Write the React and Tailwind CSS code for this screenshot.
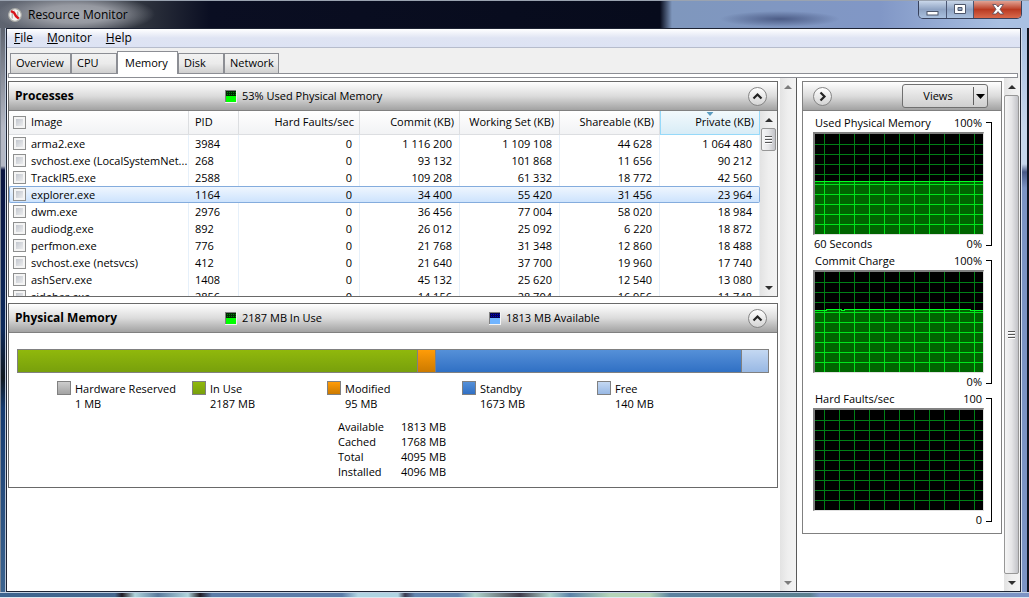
import { useState } from "react";
import clsx from "clsx";

const tabs = [
  { name: "Overview", width: "w-[61px]" },
  { name: "CPU", width: "w-[46px]" },
  { name: "Memory", width: "w-[61px]" },
  { name: "Disk", width: "w-[46px]" },
  { name: "Network", width: "w-[55px]" },
];

const columns = [
  { label: "Hard Faults/sec", key: "faults" },
  { label: "Commit (KB)", key: "commit" },
  { label: "Working Set (KB)", key: "workingSet" },
  { label: "Shareable (KB)", key: "shareable" },
  { label: "Private (KB)", key: "private", sorted: true },
];

const processes = [
  { name: "arma2.exe", pid: 3984, faults: "0", commit: "1 116 200", workingSet: "1 109 108", shareable: "44 628", private: "1 064 480" },
  { name: "svchost.exe (LocalSystemNet...", pid: 268, faults: "0", commit: "93 132", workingSet: "101 868", shareable: "11 656", private: "90 212" },
  { name: "TrackIR5.exe", pid: 2588, faults: "0", commit: "109 208", workingSet: "61 332", shareable: "18 772", private: "42 560" },
  { name: "explorer.exe", pid: 1164, faults: "0", commit: "34 400", workingSet: "55 420", shareable: "31 456", private: "23 964" },
  { name: "dwm.exe", pid: 2976, faults: "0", commit: "36 456", workingSet: "77 004", shareable: "58 020", private: "18 984" },
  { name: "audiodg.exe", pid: 892, faults: "0", commit: "26 012", workingSet: "25 092", shareable: "6 220", private: "18 872" },
  { name: "perfmon.exe", pid: 776, faults: "0", commit: "21 768", workingSet: "31 348", shareable: "12 860", private: "18 488" },
  { name: "svchost.exe (netsvcs)", pid: 412, faults: "0", commit: "21 640", workingSet: "37 700", shareable: "19 960", private: "17 740" },
  { name: "ashServ.exe", pid: 1408, faults: "0", commit: "45 132", workingSet: "25 620", shareable: "12 540", private: "13 080" },
  { name: "sidebar.exe", pid: 2856, faults: "0", commit: "14 156", workingSet: "28 704", shareable: "16 956", private: "11 748" },
];

const memory = [
  { label: "Hardware Reserved", mb: 1, color: "from-[#cccccc] to-[#a3a3a3]" },
  { label: "In Use", mb: 2187, color: "from-[#90b80c] to-[#78a00c]" },
  { label: "Modified", mb: 95, color: "from-[#ff9c08] to-[#cc7a00]" },
  { label: "Standby", mb: 1673, color: "from-[#5590d8] to-[#3070c4]" },
  { label: "Free", mb: 140, color: "from-[#c4d8f2] to-[#98b8e4]" },
];

const totals = [
  ["Available", "1813 MB"],
  ["Cached", "1768 MB"],
  ["Total", "4095 MB"],
  ["Installed", "4096 MB"],
];

const graphs = [
  { title: "Used Physical Memory", max: "100%", min: "0%", time: "60 Seconds", line: "0,47.5 168,47.5" },
  { title: "Commit Charge", max: "100%", min: "0%", line: "0,38.5 11,38.5 11,37.5 26,37.5 26,38.5 29,38.5 29,37.5 155,37.5 155,38.5 168,38.5" },
  { title: "Hard Faults/sec", max: "100", min: "0" },
];

function Checkbox() {
  return (
    <input
      type="checkbox"
      className="h-[13px] w-[13px] shrink-0 appearance-none border border-[#8e8f8f] bg-linear-to-br from-[#b8bdc6] to-[#f6f6f6] shadow-[inset_0_0_0_2px_#f4f4f4] checked:bg-[#4b6fa8]"
    />
  );
}

function RoundButton({ label, right }) {
  return (
    <button
      aria-label={label}
      className="flex h-[19px] w-[19px] shrink-0 items-center justify-center rounded-full border border-[#858585] bg-linear-to-b from-white to-[#d4d4d4]"
    >
      <svg
        width="11"
        height="11"
        viewBox="0 0 11 11"
        fill="none"
        stroke="#222"
        strokeWidth="2.2"
        className={clsx(right && "rotate-90")}
      >
        <path d="M1.5 7.5 L5.5 3.5 L9.5 7.5" />
      </svg>
    </button>
  );
}

function Indicator({ blue, children }) {
  return (
    <div className="flex items-center gap-[5px]">
      <svg width="12" height="13" viewBox="0 0 12 13" shapeRendering="crispEdges">
        <rect width="12" height="13" fill="#f4f4f4" />
        <rect width="11" height="12" fill="#808080" />
        <rect x="1" y="1" width="10" height="5" fill={blue ? "#0000c8" : "#008010"} />
        <path
          d="M1 1.5H11M1 3.5H11M1 5.5H11M1.5 1V6M3.5 1V6M5.5 1V6M7.5 1V6M9.5 1V6"
          stroke={blue ? "#000050" : "#002800"}
        />
        <rect x="1" y="6" width="10" height="6" fill={blue ? "#70b4ff" : "#00ff00"} />
      </svg>
      <span>{children}</span>
    </div>
  );
}

function PanelHeader({ title, children }) {
  return (
    <div className="flex h-[29px] items-center border-b border-[#808080] bg-linear-to-b from-white via-[#dcdcdc] to-[#a2a2a2] pr-[10px] pl-[6px]">
      <h2 className="w-[210px] shrink-0 text-[12px] font-bold">{title}</h2>
      <div className="flex flex-1">{children}</div>
      <RoundButton label={`Collapse ${title}`} />
    </div>
  );
}

function ArrowButton({ label, down, faded }) {
  return (
    <button aria-label={label} className="flex h-[17px] w-full shrink-0 items-center justify-center">
      <svg width="8" height="4" viewBox="0 0 8 4" className={clsx(down && "rotate-180")}>
        <path d="M4 0L8 4H0Z" fill={faded ? "#7c7c7c" : "#303030"} />
      </svg>
    </button>
  );
}

function Grip() {
  return (
    <div className="flex h-2 w-[7px] flex-col justify-between">
      <div className="h-0.5 border-b border-white bg-[#555]" />
      <div className="h-0.5 border-b border-white bg-[#555]" />
      <div className="h-0.5 border-b border-white bg-[#555]" />
    </div>
  );
}

function Scrollbar({ faded, thumb, wide }) {
  return (
    <div
      className={clsx(
        "flex shrink-0 flex-col bg-linear-to-r from-[#e3e3e3] via-[#efefef] to-[#f3f3f3]",
        wide ? "w-[17px] pl-px" : "w-4"
      )}
    >
      <ArrowButton label="Scroll up" faded={faded} />
      <div className="flex min-h-0 flex-1 flex-col">
        {thumb && (
          <div
            className={clsx(
              "flex w-[15px] items-center justify-center rounded-xs border border-[#979797] bg-linear-to-r from-[#f5f5f5] via-[#e6e6e8] to-[#c2c3c8]",
              thumb
            )}
          >
            <Grip />
          </div>
        )}
      </div>
      <ArrowButton label="Scroll down" down faded={faded} />
    </div>
  );
}

function Graph({ title, max, min, time, line }) {
  const xs = [9, 24, 39, 54, 69, 84, 99, 114, 129, 144, 159];
  const ys = [10, 20, 30, 40, 50, 60, 70, 80, 90];
  const grid = xs.map((x) => `M${x + 0.5} 0V100`).join("") + ys.map((y) => `M0 ${y + 0.5}H168`).join("");
  const id = title.replace(/\W/g, "");

  return (
    <div className="flex h-[138px] gap-[2px]">
      <div className="flex w-[171px] flex-col">
        <div className="flex h-[17px] items-center justify-between pr-[2px] pl-[2px]">
          <span>{title}</span>
          <span>{max}</span>
        </div>
        <div className="border-t-2 border-r border-b border-l-2 border-t-[#808080] border-r-[#e0e0e0] border-b-[#e0e0e0] border-l-[#808080]">
          <svg width="168" height="100" viewBox="0 0 168 100" shapeRendering="crispEdges" className="block">
            <rect width="168" height="100" fill="#000" />
            <path d={grid} stroke="#007f16" fill="none" />
            {line && (
              <>
                <clipPath id={id}>
                  <polygon points={`${line} 168,100 0,100`} />
                </clipPath>
                <g clipPath={`url(#${id})`}>
                  <rect width="168" height="100" fill="#006400" />
                  <path d={grid} stroke="#00e41c" fill="none" />
                </g>
                <polyline points={line} stroke="#00ff20" fill="none" />
              </>
            )}
          </svg>
        </div>
        <div className="flex h-[18px] items-center justify-between pr-[2px] pl-px">
          <span>{time}</span>
          <span>{min}</span>
        </div>
      </div>
      <div className="my-[7px] w-1.5 border-y border-r border-black" />
    </div>
  );
}

function TitleBar() {
  return (
    <header className="flex h-7 shrink-0 items-start justify-between border-t border-[#9aa3b0] bg-[radial-gradient(ellipse_80px_20px_at_75px_13px,#a4a7ae_0,#9699a1_45%,#9699a100_100%),radial-gradient(ellipse_60px_8px_at_780px_18px,#4c5c86_0,#4c5c8600_100%),linear-gradient(180deg,#b4d0f000_0,#b4d0f000_100%),linear-gradient(90deg,#5e6470_0,#585d68_50px,#30353f_140px,#0a0e22_210px,#070b1c_660px,#7f97bd_672px,#8197c6_880px,#a9c0e2_1000px)] pr-[7px]">
      <div className="flex h-full items-center gap-[6px] pl-2">
        <svg width="14" height="14" viewBox="0 0 14 14">
          <circle cx="7" cy="7" r="6.3" fill="#f4f4f4" stroke="#a9aaa6" strokeWidth="1.2" />
          <path d="M4.2 10.5V5.5A2.8 2.8 0 0 1 6.5 3M9.8 3.5V8.5" stroke="#9aa39a" fill="none" />
          <path d="M3 3.2L6 4.6L8 8.2L10.8 10.6" stroke="#d8141c" strokeWidth="2.4" fill="none" />
        </svg>
        <h1 className="text-[12px]">Resource Monitor</h1>
      </div>
      <div className="flex h-[18px] overflow-hidden rounded-b-[5px] border border-t-0 border-[#37415c]">
        <button
          aria-label="Minimize"
          className="flex w-7 items-center justify-center border-r border-[#4b5673] bg-linear-to-b from-[#c9d7ea] via-[#8fa3c3] to-[#a9c0de]"
        >
          <svg width="13" height="12" viewBox="0 0 13 12">
            <rect x="1" y="7.5" width="11" height="3.5" fill="#fff" stroke="#4d566b" />
          </svg>
        </button>
        <button
          aria-label="Maximize"
          className="flex w-[27px] items-center justify-center border-r border-[#4b5673] bg-linear-to-b from-[#c9d7ea] via-[#8fa3c3] to-[#a9c0de]"
        >
          <svg width="12" height="11" viewBox="0 0 12 11">
            <path d="M.5 .5H11.5V9.5H.5ZM4 3.5V6.5H8V3.5Z" fill="#fff" fillRule="evenodd" stroke="#4d566b" />
          </svg>
        </button>
        <button
          aria-label="Close"
          className="flex w-[47px] items-center justify-center bg-linear-to-b from-[#e0a294] via-[#b93a22] to-[#d9694c]"
        >
          <svg width="12" height="11" viewBox="0 0 12 11">
            <path
              d="M.7 .5H4L6 3L8 .5H11.3L8 5.3L11.5 10H8L6 7.6L4 10H.5L4 5.3Z"
              fill="#fff"
              stroke="#544a5a"
              strokeWidth=".8"
            />
          </svg>
        </button>
      </div>
    </header>
  );
}

function ProcessTable() {
  const [selected, setSelected] = useState("explorer.exe");

  return (
    <div className="flex h-[185px] overflow-hidden">
      <div className="min-w-0 flex-1">
        <table className="w-full table-fixed border-separate border-spacing-0">
          <colgroup>
            <col />
            <col className="w-[50px]" />
            <col className="w-[121px]" />
            <col className="w-[100px]" />
            <col className="w-[100px]" />
            <col className="w-[100px]" />
            <col className="w-[100px]" />
          </colgroup>
          <thead>
            <tr className="h-6 bg-linear-to-b from-white to-[#f1f2f4] text-left">
              <th className="border-r border-b border-[#dcdee1] p-0 pl-1 font-normal">
                <label className="flex items-center gap-[5px]">
                  <Checkbox />
                  Image
                </label>
              </th>
              <th className="border-r border-b border-[#dcdee1] p-0 pl-[6px] font-normal">PID</th>
              {columns.map((col) => (
                <th
                  key={col.key}
                  className={clsx(
                    "relative border-r border-b p-0 pr-[5px] text-right font-normal",
                    col.sorted
                      ? "border-l border-[#96d9f9] bg-linear-to-b from-[#f2f9fc] to-[#d8ecf6]"
                      : "border-[#dcdee1]"
                  )}
                >
                  {col.sorted && (
                    <svg width="7" height="4" viewBox="0 0 7 4" className="absolute top-px left-1/2 -translate-x-1/2">
                      <path d="M0 0H7L3.5 4Z" fill="#5b9cc0" />
                    </svg>
                  )}
                  {col.label}
                </th>
              ))}
            </tr>
          </thead>
          <tbody>
            {processes.map((p) => {
              const active = p.name === selected;
              const cell = active ? "border-y border-[#84acdd]" : "border-r border-[#e6f0fa]";
              return (
                <tr
                  key={p.pid}
                  onClick={() => setSelected(p.name)}
                  className={clsx("h-[17px] leading-[15px]", active && "bg-linear-to-b from-[#f1f7fe] to-[#cbe2fd]")}
                >
                  <td className={clsx("p-0", cell, active ? "rounded-l-xs border-l pl-[3px]" : "pl-1")}>
                    <label className="flex items-center gap-[5px] whitespace-nowrap">
                      <Checkbox />
                      {p.name}
                    </label>
                  </td>
                  <td className={clsx("p-0 pl-[6px]", cell)}>{p.pid}</td>
                  {columns.map((col) => (
                    <td
                      key={col.key}
                      className={clsx(
                        "p-0 text-right",
                        cell,
                        active ? (col.sorted ? "rounded-r-xs border-r pr-[7px]" : "pr-2") : "pr-[7px]"
                      )}
                    >
                      {p[col.key]}
                    </td>
                  ))}
                </tr>
              );
            })}
          </tbody>
        </table>
      </div>
      <Scrollbar thumb="h-[23px]" wide />
    </div>
  );
}

function PhysicalMemory() {
  return (
    <div className="px-2 pt-4 pb-2">
      <div className="flex h-6 border border-[#808080]">
        {memory.slice(1).map((m, i) => (
          <div
            key={m.label}
            className={clsx("bg-linear-to-b", m.color, i > 0 && "border-l border-[#808080]")}
            style={{ flex: `${m.mb} 0 0px` }}
          />
        ))}
      </div>

      {/* Legend */}
      <div className="mt-2 flex pl-10">
        {memory.map((m) => (
          <div key={m.label} className="flex w-[135px] gap-1 leading-[15px] whitespace-nowrap">
            <div className={clsx("h-[14px] w-[14px] shrink-0 border border-[#808080] bg-linear-to-b", m.color)} />
            <div>
              <p>{m.label}</p>
              <p>{m.mb} MB</p>
            </div>
          </div>
        ))}
      </div>

      {/* Totals */}
      <dl className="mt-2 grid grid-cols-[63px_1fr] pl-[321px] leading-[15px]">
        {totals.map(([label, value]) => (
          <div key={label} className="contents">
            <dt>{label}</dt>
            <dd>{value}</dd>
          </div>
        ))}
      </dl>
    </div>
  );
}

export default function App() {
  const [activeTab, setActiveTab] = useState("Memory");

  return (
    <div className="flex h-screen flex-col overflow-hidden bg-[#0a0e20] font-['Open_Sans','Noto_Sans',sans-serif] text-[11px] text-black">
      <TitleBar />
      <div className="flex min-h-0 flex-1">
        <div className="w-[6px] shrink-0 border-r border-l border-r-[#b8c4d6] border-l-[#7f8794] bg-[linear-gradient(180deg,#5e6470_0,#b4b8c4_100px,#b4b8c4_138px,#0a1440_142px,#0c2a5c_300px,#101820_350px,#143a70_380px,#3c648f_100%)]" />

        <div className="flex min-w-0 flex-1 flex-col border border-[#1d2333] bg-white">
          <nav className="flex h-[19px] shrink-0 items-center gap-[14px] border-b border-[#b6bccc] bg-linear-to-b from-white via-[#dfe4f3] to-[#dde3f4] pl-[7px] text-[12px]">
            <button><u>F</u>ile</button>
            <button><u>M</u>onitor</button>
            <button><u>H</u>elp</button>
          </nav>

          {/* Tabs */}
          <div className="shrink-0 bg-[#f0f0f0] pr-[2px] pl-px">
            <div role="tablist" className="relative z-10 -mb-px flex h-[26px] items-end pl-[2px]">
              {tabs.map((tab) => (
                <button
                  key={tab.name}
                  role="tab"
                  aria-selected={tab.name === activeTab}
                  onClick={() => setActiveTab(tab.name)}
                  className={clsx(
                    "border border-[#8c8e94] text-left",
                    tab.width,
                    tab.name === activeTab
                      ? "h-[23px] border-b-0 bg-white pl-[7px]"
                      : "h-[21px] bg-linear-to-b from-[#f2f2f2] via-[#ebebeb] to-[#cfcfcf] pl-[5px]"
                  )}
                >
                  {tab.name}
                </button>
              ))}
            </div>
            <div className="h-[5px] border border-[#8c8e94] bg-white" />
          </div>

          <div className="flex min-h-0 flex-1">
            <main className="flex min-w-0 flex-1 flex-col gap-[6px] pt-[3px] pr-[2px] pl-px">
              <section className="border border-[#696969]">
                <PanelHeader title="Processes">
                  <Indicator>53% Used Physical Memory</Indicator>
                </PanelHeader>
                <ProcessTable />
              </section>

              <section className="border border-[#696969]">
                <PanelHeader title="Physical Memory">
                  <div className="w-[264px]">
                    <Indicator>2187 MB In Use</Indicator>
                  </div>
                  <Indicator blue>1813 MB Available</Indicator>
                </PanelHeader>
                <PhysicalMemory />
              </section>
            </main>
            <Scrollbar faded />

            <aside className="flex shrink-0 border-l border-[#5a5a5a] pl-[5px]">
              <div className="w-[200px] pt-[3px]">
                <section className="border border-[#808080]">
                  <div className="flex h-[29px] items-center justify-between border-b border-[#808080] bg-linear-to-b from-white via-[#dcdcdc] to-[#a2a2a2] pr-[13px] pl-[10px]">
                    <RoundButton label="Hide graphs" right />
                    <div className="flex h-6 rounded-[3px] border border-[#707070] bg-linear-to-b from-[#f4f4f4] to-[#cfcfcf]">
                      <button className="w-[70px]">Views</button>
                      <button aria-label="Choose graph size" className="my-[2px] flex w-[14px] items-center justify-center border-l border-[#606060]">
                        <svg width="9" height="5" viewBox="0 0 9 5">
                          <path d="M0 0H9L4.5 5Z" />
                        </svg>
                      </button>
                    </div>
                  </div>
                  <div className="pt-[4px] pb-[4px] pl-[10px]">
                    {graphs.map((g) => (
                      <Graph key={g.title} {...g} />
                    ))}
                  </div>
                </section>
              </div>
              <div className="flex pl-[2px]">
                <Scrollbar thumb="flex-1" />
              </div>
            </aside>
          </div>
        </div>

        <div className="w-2 shrink-0 border-r-2 border-l border-r-[#10141f] border-l-[#d0daea] bg-[linear-gradient(180deg,#a9c0e2_0,#c6d6ec_100px,#c6d6ec_136px,#4a5a88_144px,#7b93c4_160px,#7b93c4_100%)]" />
      </div>
      <div className="h-[6px] shrink-0 border-t border-b border-t-[#c2d0e2] border-b-[#e0e8f0] bg-[linear-gradient(90deg,#3c648f_0,#46688f_115px,#201a22_122px,#b0d4dc_135px,#5a7a9c_158px,#b0d4dc_188px,#201a22_200px,#5b7ca8_212px,#5b7ca8_342px,#b0d4e2_358px,#b0d4e2_398px,#3a3a50_405px,#6284ae_415px,#6284ae_458px,#b0d4cc_475px,#403c4c_520px,#b0d4cc_550px,#5b82a8_570px,#b4d4b8_610px,#b4d4b8_650px,#5b82a0_670px,#5b8090_810px,#7b93c4_820px,#7b93c4_100%)]" />
    </div>
  );
}
